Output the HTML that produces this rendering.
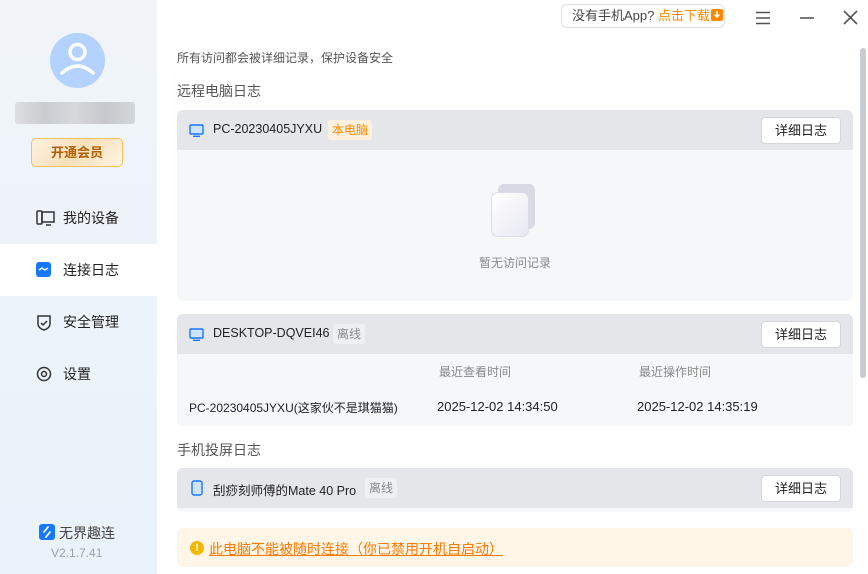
<!DOCTYPE html>
<html><head><meta charset="utf-8"><style>
*{margin:0;padding:0;box-sizing:border-box}
body{width:868px;height:574px;overflow:hidden;font-family:"Liberation Sans","Noto Sans CJK SC",sans-serif;background:#fff;position:relative;color:#222}
.side{position:absolute;left:0;top:0;width:157px;height:574px;background:linear-gradient(180deg,#f0f4f8,#eaf2fb)}
.abs{position:absolute}
.nav{position:absolute;left:0;width:157px;height:52px;font-size:14px;color:#222}
.nav span{position:absolute;left:63px;top:16px}
.nav svg{position:absolute;left:36px;top:18px}
.card{position:absolute;left:177px;width:676px;border-radius:6px;background:#f6f7f9;overflow:hidden}
.hd{height:40px;background:#e5e6ea;position:relative;font-size:12.5px}
.hd .t{position:absolute;left:36px;top:12px}
.hd svg{position:absolute;left:12px;top:14px}
.btn{position:absolute;right:12px;top:7px;width:80px;height:27px;background:#fff;border:1px solid #d3d5da;border-radius:4px;font-size:13px;text-align:center;line-height:25px}
.tag{position:absolute;top:10px;height:20px;padding:0 4px;font-size:12px;line-height:20px;border-radius:3px}
</style></head><body>
<div class="side">
 <div class="abs" style="left:50px;top:33px;width:55px;height:55px;border-radius:50%;background:#b3d2fd">
  <svg width="55" height="55"><circle cx="27.5" cy="19" r="7.5" fill="none" stroke="#fff" stroke-width="3.5"/><path d="M12 40 Q27.5 26 43 40" fill="none" stroke="#fff" stroke-width="3.5" stroke-linecap="round"/></svg>
 </div>
 <div class="abs" style="left:15px;top:102px;width:120px;height:22px;background:linear-gradient(90deg,#dcdfe1,#c9ccd0,#d6d9dc,#c5c8cc,#d4d7da);border-radius:3px"></div>
 <div class="abs" style="left:31px;top:138px;width:92px;height:29px;border:1px solid #f7c05a;border-radius:5px;background:linear-gradient(135deg,#fdf1de,#f9e0bb,#fdf3e3);color:#b35f00;font-size:13px;font-weight:bold;text-align:center;line-height:27px">开通会员</div>
 <div class="nav" style="top:192px"><svg width="19" height="16"><rect x="1" y="1" width="5" height="13" rx="1" fill="none" stroke="#333" stroke-width="1.5"/><rect x="6" y="2" width="12" height="10" fill="none" stroke="#333" stroke-width="1.5"/><path d="M10 15h5" stroke="#333" stroke-width="1.5"/></svg><span>我的设备</span></div>
 <div class="nav" style="top:244px;background:#fff"><svg width="15" height="15"><rect width="15" height="15" rx="3" fill="#1677ff"/><path d="M3 8l3-2 3 2 3-2" fill="none" stroke="#fff" stroke-width="1.4"/></svg><span>连接日志</span></div>
 <div class="nav" style="top:296px"><svg width="16" height="17"><path d="M2 2h12v8q0 4-6 6-6-2-6-6z" fill="none" stroke="#333" stroke-width="1.5"/><path d="M5 9l2 2 4-4" fill="none" stroke="#333" stroke-width="1.5"/></svg><span>安全管理</span></div>
 <div class="nav" style="top:348px"><svg width="16" height="16"><circle cx="8" cy="8" r="6.5" fill="none" stroke="#333" stroke-width="1.5"/><circle cx="8" cy="8" r="2.5" fill="none" stroke="#333" stroke-width="1.5"/></svg><span>设置</span></div>
 <div class="abs" style="left:39px;top:524px;width:16px;height:16px;border-radius:3px;background:#1677ff"><svg width="16" height="16"><path d="M9 3L5 8M11 8L7 13" stroke="#fff" stroke-width="1.8" stroke-linecap="round"/></svg></div>
 <div class="abs" style="left:59px;top:523px;font-size:14px;color:#444">无界趣连</div>
 <div class="abs" style="left:51px;top:546px;font-size:12px;color:#9aa3b0">V2.1.7.41</div>
</div>
<div class="abs" style="left:561px;top:4px;width:164px;height:24px;border:1px solid #dcdfe4;border-radius:6px;font-size:13px;line-height:22px;padding-left:10px;color:#444;white-space:nowrap">没有手机App? <span style="color:#ff8a00">点击下载</span><span style="display:inline-block;width:12px;height:12px;background:#ff8a00;border-radius:2px;vertical-align:-1px;margin-left:1px;position:relative"><svg width="12" height="12" style="position:absolute;left:0;top:0"><path d="M6 2v6M3.5 5.5L6 8l2.5-2.5" fill="none" stroke="#fff" stroke-width="1.5"/></svg></span></div>
<svg class="abs" style="left:755px;top:11px" width="16" height="14"><path d="M1 1.5h14M1 7h14M1 12.5h14" stroke="#555" stroke-width="1.6"/></svg>
<svg class="abs" style="left:799px;top:11px" width="16" height="14"><path d="M1 7h14" stroke="#555" stroke-width="1.6"/></svg>
<svg class="abs" style="left:843px;top:10px" width="15" height="15"><path d="M1 1l13 13M14 1L1 14" stroke="#555" stroke-width="1.6"/></svg>
<div class="abs" style="left:860px;top:48px;width:6px;height:330px;border-radius:3px;background:#c8cbd0"></div>
<div class="abs" style="left:177px;top:49px;font-size:12px;color:#555">所有访问都会被详细记录，保护设备安全</div>
<div class="abs" style="left:177px;top:81px;font-size:14px;color:#555">远程电脑日志</div>
<div class="card" style="top:110px;height:191px">
 <div class="hd"><svg width="15" height="13"><rect x="1" y="1" width="13" height="9" rx="1" fill="#cfe3ff" stroke="#1677ff" stroke-width="1.4"/><path d="M4 12.3h7" stroke="#1677ff" stroke-width="1.4"/></svg><span class="t">PC-20230405JYXU</span><span class="tag" style="left:151px;background:#fdf1dd;color:#ff8a00">本电脑</span><div class="btn">详细日志</div></div>
 <div class="abs" style="left:321px;top:74px;width:37px;height:45px;border-radius:6px;background:#d9d9e5"></div>
 <div class="abs" style="left:314px;top:82px;width:38px;height:45px;border-radius:7px;background:linear-gradient(135deg,#fff,#e8e8f2);border:1px solid #dcdce8"></div>
 <div class="abs" style="left:302px;top:144px;font-size:12px;color:#888">暂无访问记录</div>
</div>
<div class="card" style="top:314px;height:112px">
 <div class="hd"><svg width="15" height="13"><rect x="1" y="1" width="13" height="9" rx="1" fill="#cfe3ff" stroke="#1677ff" stroke-width="1.4"/><path d="M4 12.3h7" stroke="#1677ff" stroke-width="1.4"/></svg><span class="t">DESKTOP-DQVEI46</span><span class="tag" style="left:156px;background:#eef0f3;color:#888">离线</span><div class="btn">详细日志</div></div>
 <div class="abs" style="left:262px;top:49px;font-size:12px;color:#888">最近查看时间</div>
 <div class="abs" style="left:462px;top:49px;font-size:12px;color:#888">最近操作时间</div>
 <div class="abs" style="left:12px;top:85px;font-size:12px">PC-20230405JYXU(这家伙不是琪猫猫)</div>
 <div class="abs" style="left:260px;top:85px;font-size:13px">2025-12-02 14:34:50</div>
 <div class="abs" style="left:460px;top:85px;font-size:13px">2025-12-02 14:35:19</div>
</div>
<div class="abs" style="left:177px;top:440px;font-size:14px;color:#555">手机投屏日志</div>
<div class="card" style="top:468px;height:44px">
 <div class="hd"><svg width="12" height="16" style="left:14px;top:12px"><rect x="1" y="1" width="10" height="14" rx="2" fill="#cfe3ff" stroke="#1677ff" stroke-width="1.4"/></svg><span class="t">刮痧刻师傅的Mate 40 Pro</span><span class="tag" style="left:188px;background:#eef0f3;color:#888">离线</span><div class="btn">详细日志</div></div>
</div>
<div class="abs" style="left:177px;top:528px;width:676px;height:39px;border-radius:6px;background:#fff6e8">
 <div class="abs" style="left:13px;top:13px;width:14px;height:14px;border-radius:50%;background:#f5b800;color:#fff;font-size:11px;font-weight:bold;text-align:center;line-height:14px">!</div>
 <div class="abs" style="left:32px;top:11px;font-size:14px;color:#ff7a00;text-decoration:underline">此电脑不能被随时连接（你已禁用开机自启动）</div>
</div>
</body></html>
